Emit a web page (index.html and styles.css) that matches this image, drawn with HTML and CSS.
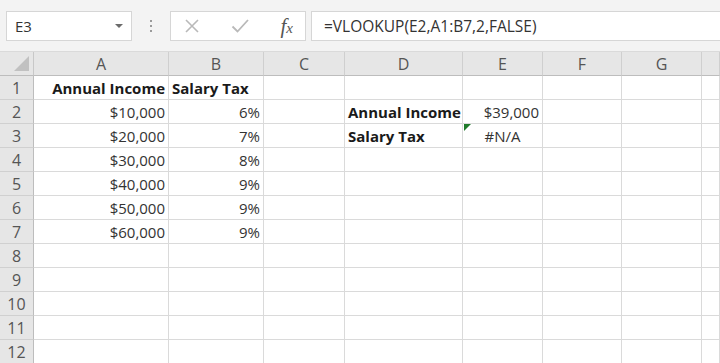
FILE: index.html
```html
<!DOCTYPE html>
<html lang="en">
<head>
    <meta charset="UTF-8">
    <title>VLOOKUP</title>
    <link rel="stylesheet" href="styles.css">
</head>
<body>
    <div class="toolbar">
        <div class="name-box">
            <span>E3</span>
            <svg class="caret" width="8" height="5" viewBox="0 0 8 5"><path d="M0 0h8L4 4z" fill="#6b6b6b"/></svg>
        </div>
        <div class="grip">
            <span></span><span></span><span></span>
        </div>
        <div class="fx-box">
            <svg width="16" height="16" viewBox="0 0 16 16"><path d="M2 2l12 12M14 2L2 14" stroke="#b9b9b9" stroke-width="1.6" fill="none"/></svg>
            <svg width="18" height="16" viewBox="0 0 18 16"><path d="M1.5 8.5l5 5L17 2" stroke="#b9b9b9" stroke-width="1.8" fill="none"/></svg>
            <span class="fx">f<i>x</i></span>
        </div>
        <div class="formula">=VLOOKUP(E2,A1:B7,2,FALSE)</div>
    </div>

    <div class="sheet">
        <div class="corner"><span class="tri"></span></div>
        <div class="col-head">A</div>
        <div class="col-head">B</div>
        <div class="col-head">C</div>
        <div class="col-head">D</div>
        <div class="col-head">E</div>
        <div class="col-head">F</div>
        <div class="col-head">G</div>
        <div class="col-head"></div>

        <div class="row-head">1</div>
        <div class="cell bold right">Annual Income</div>
        <div class="cell bold">Salary Tax</div>
        <div class="cell"></div><div class="cell"></div><div class="cell"></div><div class="cell"></div><div class="cell"></div><div class="cell"></div>

        <div class="row-head">2</div>
        <div class="cell right">$10,000</div>
        <div class="cell right">6%</div>
        <div class="cell"></div>
        <div class="cell bold">Annual Income</div>
        <div class="cell right">$39,000</div>
        <div class="cell"></div><div class="cell"></div><div class="cell"></div>

        <div class="row-head">3</div>
        <div class="cell right">$20,000</div>
        <div class="cell right">7%</div>
        <div class="cell"></div>
        <div class="cell bold">Salary Tax</div>
        <div class="cell center flagged">#N/A</div>
        <div class="cell"></div><div class="cell"></div><div class="cell"></div>

        <div class="row-head">4</div>
        <div class="cell right">$30,000</div>
        <div class="cell right">8%</div>
        <div class="cell"></div><div class="cell"></div><div class="cell"></div><div class="cell"></div><div class="cell"></div><div class="cell"></div>

        <div class="row-head">5</div>
        <div class="cell right">$40,000</div>
        <div class="cell right">9%</div>
        <div class="cell"></div><div class="cell"></div><div class="cell"></div><div class="cell"></div><div class="cell"></div><div class="cell"></div>

        <div class="row-head">6</div>
        <div class="cell right">$50,000</div>
        <div class="cell right">9%</div>
        <div class="cell"></div><div class="cell"></div><div class="cell"></div><div class="cell"></div><div class="cell"></div><div class="cell"></div>

        <div class="row-head">7</div>
        <div class="cell right">$60,000</div>
        <div class="cell right">9%</div>
        <div class="cell"></div><div class="cell"></div><div class="cell"></div><div class="cell"></div><div class="cell"></div><div class="cell"></div>

        <div class="row-head">8</div>
        <div class="cell"></div><div class="cell"></div><div class="cell"></div><div class="cell"></div><div class="cell"></div><div class="cell"></div><div class="cell"></div><div class="cell"></div>

        <div class="row-head">9</div>
        <div class="cell"></div><div class="cell"></div><div class="cell"></div><div class="cell"></div><div class="cell"></div><div class="cell"></div><div class="cell"></div><div class="cell"></div>

        <div class="row-head">10</div>
        <div class="cell"></div><div class="cell"></div><div class="cell"></div><div class="cell"></div><div class="cell"></div><div class="cell"></div><div class="cell"></div><div class="cell"></div>

        <div class="row-head">11</div>
        <div class="cell"></div><div class="cell"></div><div class="cell"></div><div class="cell"></div><div class="cell"></div><div class="cell"></div><div class="cell"></div><div class="cell"></div>

        <div class="row-head">12</div>
        <div class="cell"></div><div class="cell"></div><div class="cell"></div><div class="cell"></div><div class="cell"></div><div class="cell"></div><div class="cell"></div><div class="cell"></div>
    </div>
</body>
</html>
```

FILE: styles.css
```css
* {
    margin: 0;
    padding: 0;
    box-sizing: border-box;
}

body {
    width: 720px;
    height: 363px;
    overflow: hidden;
    background: #ffffff;
    font-family: "Open Sans", sans-serif;
    color: #333333;
}

/* formula bar */
.toolbar {
    height: 52px;
    background: #f3f3f3;
    display: flex;
    align-items: flex-start;
    padding-top: 11px;
    padding-left: 6px;
    border-bottom: 1px solid #dadada;
}

.name-box {
    width: 126px;
    height: 30px;
    background: #ffffff;
    border: 1px solid #d6d6d6;
    display: flex;
    align-items: center;
    justify-content: space-between;
    padding: 0 8px 0 8px;
    font-size: 15px;
    color: #333;
}

.grip {
    width: 38px;
    height: 30px;
    display: flex;
    flex-direction: column;
    align-items: center;
    justify-content: center;
    gap: 3px;
}

.grip span {
    width: 2px;
    height: 2px;
    background: #9a9a9a;
}

.fx-box {
    width: 136px;
    height: 30px;
    background: #ffffff;
    border: 1px solid #d6d6d6;
    display: flex;
    align-items: center;
    justify-content: space-between;
    padding: 0 12px 0 13px;
}

.fx {
    font-family: "Liberation Serif", serif;
    font-style: italic;
    font-size: 21px;
    line-height: 1;
    color: #555;
}

.fx i {
    font-size: 15px;
}

.formula {
    flex: 1;
    height: 30px;
    margin-left: 5px;
    background: #ffffff;
    border: 1px solid #d6d6d6;
    border-right: none;
    padding-left: 12px;
    display: flex;
    align-items: center;
    font-size: 15.5px;
    color: #333;
}

/* grid */
.sheet {
    display: grid;
    grid-template-columns: 34px 135px 95px 81px 118px 80px 79px 80px 1fr;
    grid-auto-rows: 24px;
    font-size: 15px;
}

.corner,
.col-head,
.row-head {
    background: #e6e6e6;
    color: #555555;
    display: flex;
    align-items: center;
    justify-content: center;
    font-size: 16px;
}

.corner {
    border-right: 1px solid #c8c8c8;
    border-bottom: 1px solid #bdbdbd;
    position: relative;
}

.tri {
    position: absolute;
    right: 4px;
    bottom: 4px;
    width: 0;
    height: 0;
    border-left: 15px solid transparent;
    border-bottom: 15px solid #c1c1c1;
}

.col-head {
    border-right: 1px solid #cfcfcf;
    border-bottom: 1px solid #bdbdbd;
    padding-top: 1px;
}

.row-head {
    border-right: 1px solid #bdbdbd;
    border-bottom: 1px solid #d0d0d0;
}

.cell {
    border-right: 1px solid #dadada;
    border-bottom: 1px solid #dadada;
    display: flex;
    align-items: center;
    padding: 1px 3px 0 3px;
    white-space: nowrap;
    color: #333;
    position: relative;
}

.bold {
    font-weight: bold;
    color: #1a1a1a;
}

.right {
    justify-content: flex-end;
}

.center {
    justify-content: center;
}

.flagged::before {
    content: "";
    position: absolute;
    left: 1px;
    top: 0;
    border-top: 7px solid #1f7a2a;
    border-right: 7px solid transparent;
}
```
